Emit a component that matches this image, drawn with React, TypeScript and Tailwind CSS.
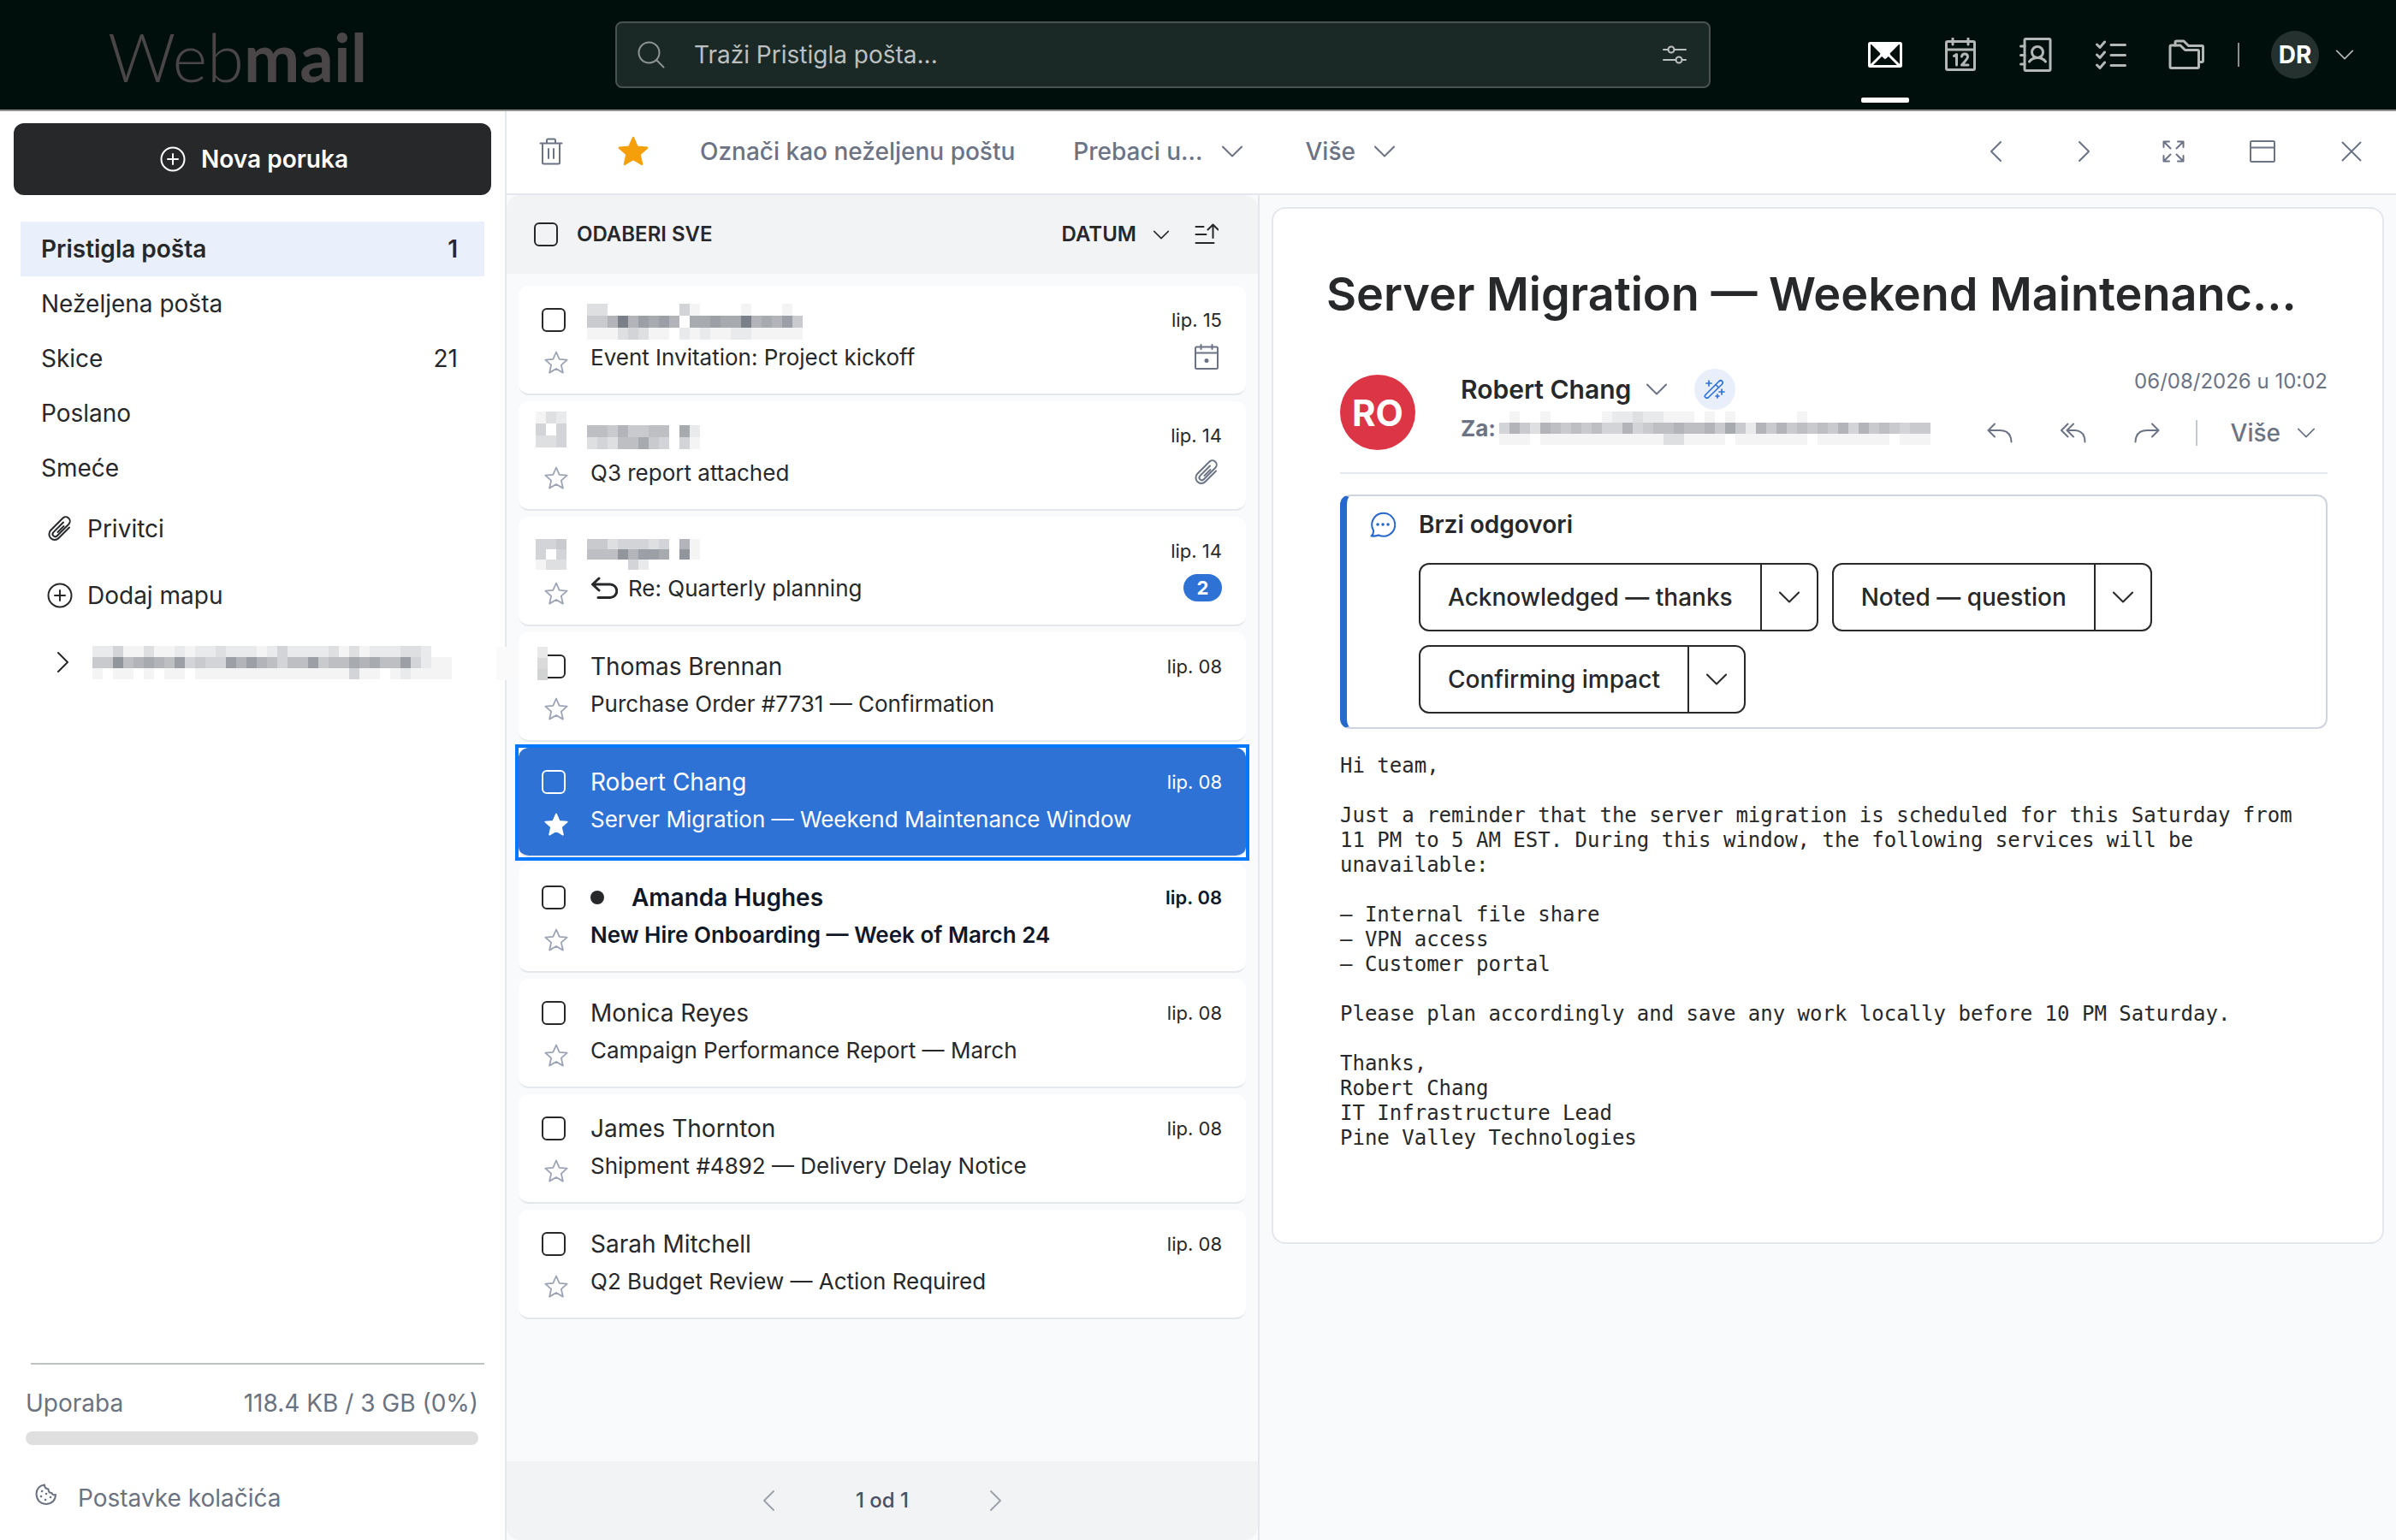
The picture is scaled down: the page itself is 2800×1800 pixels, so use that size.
import React from 'react';

interface GlyphProps {
    w: number;
    h: number;
    stroke?: number;
    className?: string;
    children: React.ReactNode;
}

// Icons are drawn on a canvas of their own pixel size
const Glyph: React.FC<GlyphProps> = ({ w, h, stroke = 2, className = '', children }) => (
    <svg
        width={w}
        height={h}
        viewBox={`0 0 ${w} ${h}`}
        fill="none"
        stroke="currentColor"
        strokeWidth={stroke}
        strokeLinecap="round"
        strokeLinejoin="round"
        className={`shrink-0 ${className}`}
        aria-hidden="true"
    >
        {children}
    </svg>
);

const ChevronDown = ({ w = 24, className = '' }: { w?: number; className?: string }) => (
    <svg width={w} height={w / 2 + 2} viewBox="0 0 26 15" fill="none" stroke="currentColor" strokeWidth="2.200" strokeLinecap="round" strokeLinejoin="round" className={`shrink-0 ${className}`} aria-hidden="true">
        <path d="M1 1.500l12 12 12-12" />
    </svg>
);

const ChevronLeft = () => <Glyph w={16} h={26}><path d="M14 2L3 13l11 11" /></Glyph>;
const ChevronRight = () => <Glyph w={16} h={26}><path d="M2 2l11 11L2 24" /></Glyph>;

const PlusCircle = () => (
    <Glyph w={30} h={30}>
        <circle cx="15" cy="15" r="13.500" />
        <path d="M15 9v12M9 15h12" />
    </Glyph>
);

const Clip = () => (
    <Glyph w={30} h={30}>
        <path d="M26 13.500L13.500 26a6.500 6.500 0 0 1-9.200-9.200L18 3a4.800 4.800 0 0 1 7.500 6.500L11.800 23.300a3 3 0 0 1-4.400-4.200L19 7.500" />
        <path d="M19.500 12l-7 7" />
    </Glyph>
);

const STAR = 'M14 1.500l3.700 8.300 9 .9-6.800 6 2 8.900-7.900-4.600-7.900 4.600 2-8.900-6.800-6 9-.9z';

const Star = ({ filled = false, size = 28 }: { filled?: boolean; size?: number }) => (
    <svg width={size} height={size} viewBox="0 0 28 28" fill={filled ? 'currentColor' : 'none'} stroke="currentColor" strokeWidth="1.800" strokeLinejoin="round" aria-hidden="true">
        <path d={STAR} />
    </svg>
);

// Redacted text: every character is the strength of one block, a dot is empty
const Mosaic = ({ rows, w = 12, h }: { rows: string[]; w?: number; h: number }) => (
    <svg width={rows[0].length * w} height={rows.length * h} shapeRendering="crispEdges" className="shrink-0" aria-hidden="true">
        {rows.map((row, y) =>
            row.split('').map((c, x) =>
                c === '.' ? null : (
                    <rect key={`${x}-${y}`} x={x * w} y={y * h} width={w} height={h} fill="#4f5560" fillOpacity={parseInt(c, 16) / 16} />
                )
            )
        )}
    </svg>
);

const CHECKBOX = 'size-7 shrink-0 appearance-none rounded-md border-2 bg-transparent';

const apps = [
    {
        label: 'E-pošta',
        active: true,
        icon: (
            <Glyph w={40} h={32} stroke={3}>
                <rect x="1.500" y="2.500" width="37" height="27" rx="1" />
                <path d="M2 2h36L22 18l-2 1-2-1z" fill="currentColor" stroke="none" />
                <path d="M3 29l12-12M37 29L25 17M15.500 15.500l4.500 4 4.500-4" />
            </Glyph>
        ),
    },
    {
        label: 'Kalendar',
        icon: (
            <Glyph w={36} h={40} stroke={3}>
                <rect x="1.500" y="4.500" width="33" height="33" rx="1.500" />
                <path d="M1.500 14h33M9 1v7M27 1v7M10.500 21.500l3-2V32M19.500 22q.5-3 3.500-3 3.500 0 3.500 3.500 0 2-7 9.500h7.500" />
            </Glyph>
        ),
    },
    {
        label: 'Kontakti',
        icon: (
            <Glyph w={38} h={40} stroke={3}>
                <rect x="6" y="1.500" width="30" height="37" rx="1.500" />
                <circle cx="21" cy="17" r="6.500" />
                <path d="M11.500 28q3.500-4.500 9.500-4.500t9.500 4.500M1.500 10H6M1.500 20.500H6M1.500 31H6" />
            </Glyph>
        ),
    },
    {
        label: 'Zadaci',
        icon: (
            <Glyph w={36} h={34} stroke={3}>
                <path d="M1.500 5l3.500 3.500 5.500-6.500M1.500 17l3.500 3.500 5.500-6.500M1.500 29l3.500 3.500 5.500-6.500M18 5.500h16.500M18 17.500h16.500M18 29.500h16.500" />
            </Glyph>
        ),
    },
    {
        label: 'Datoteke',
        icon: (
            <Glyph w={42} h={36} stroke={3}>
                <path d="M2 8.500q0-1.500 1.500-1.500H14l5.500 5.500H34q1.500 0 1.500 1.500v18q0 1.500-1.500 1.500H3.500Q2 33.500 2 32z" />
                <path d="M8 7V3.500Q8 2 9.500 2h8.500l5.500 5.500h16q1 0 1 1.500v16q0 1.500-1.500 1.500h-3" />
            </Glyph>
        ),
    },
];

const folders = [
    { name: 'Pristigla pošta', count: 1, active: true },
    { name: 'Neželjena pošta' },
    { name: 'Skice', count: 21 },
    { name: 'Poslano' },
    { name: 'Smeće' },
];

interface Message {
    id: number;
    sender?: string;
    redacted?: string[];
    redactedBox?: string[];
    block?: number;
    subject: string;
    date: string;
    mark?: 'calendar' | 'clip' | 'thread';
    selected?: boolean;
    unread?: boolean;
    replied?: boolean;
}

const messages: Message[] = [
    {
        id: 1,
        redacted: ['33.......41....1...1.', '557c79897.88988c78795', '11134311.212112211111'],
        block: 14,
        subject: 'Event Invitation: Project kickoff',
        date: 'lip. 15',
        mark: 'calendar',
    },
    {
        id: 2,
        redacted: ['66575566.82', '34366854.41'],
        redactedBox: ['132', '4.4', '334'],
        block: 14,
        subject: 'Q3 report attached',
        date: 'lip. 14',
        mark: 'clip',
    },
    {
        id: 3,
        redacted: ['55344434.71', '666a7998.a1', '....42.....'],
        redactedBox: ['445', '4.4', '133'],
        block: 12,
        subject: 'Re: Quarterly planning',
        date: 'lip. 14',
        mark: 'thread',
        replied: true,
    },
    { id: 4, sender: 'Thomas Brennan', subject: 'Purchase Order #7731 — Confirmation', date: 'lip. 08' },
    { id: 5, sender: 'Robert Chang', subject: 'Server Migration — Weekend Maintenance Window', date: 'lip. 08', selected: true },
    { id: 6, sender: 'Amanda Hughes', subject: 'New Hire Onboarding — Week of March 24', date: 'lip. 08', unread: true },
    { id: 7, sender: 'Monica Reyes', subject: 'Campaign Performance Report — March', date: 'lip. 08' },
    { id: 8, sender: 'James Thornton', subject: 'Shipment #4892 — Delivery Delay Notice', date: 'lip. 08' },
    { id: 9, sender: 'Sarah Mitchell', subject: 'Q2 Budget Review — Action Required', date: 'lip. 08' },
];

const quickReplies = ['Acknowledged — thanks', 'Noted — question', 'Confirming impact'];

const body = `Hi team,

Just a reminder that the server migration is scheduled for this Saturday from
11 PM to 5 AM EST. During this window, the following services will be
unavailable:

– Internal file share
– VPN access
– Customer portal

Please plan accordingly and save any work locally before 10 PM Saturday.

Thanks,
Robert Chang
IT Infrastructure Lead
Pine Valley Technologies`;

const Header: React.FC = () => (
    <header className="flex h-[130px] shrink-0 items-center border-b-2 border-[#8f918f] bg-[#000f0b] pr-[50px]">
        <div className="w-[719px] shrink-0 pt-1 pl-[126px] font-['Lato',sans-serif] text-[78px] leading-none text-[#4a4647]">
            <span className="font-light">Web</span>
            <span className="font-bold">mail</span>
        </div>
        <label className="flex h-[78px] flex-1 items-center rounded-lg border-2 border-[#48524f] bg-[#1b2926] pr-[26px] pl-6 text-[#bcc0bf]">
            <Glyph w={32} h={32} className="text-[#8d9492]">
                <circle cx="13.500" cy="13.500" r="12" />
                <path d="M22.500 22.500l8 8" />
            </Glyph>
            <input
                type="search"
                aria-label="Traži"
                placeholder="Traži Pristigla pošta..."
                className="ml-[34px] flex-1 bg-transparent text-[28px] outline-none placeholder:text-[#bcc0bf] placeholder:opacity-100"
            />
            <button aria-label="Filtri">
                <Glyph w={28} h={24} stroke={2}>
                    <circle cx="10" cy="6" r="3.500" />
                    <circle cx="19" cy="18" r="3.500" />
                    <path d="M1 6h5.500M13.500 6H27M1 18h14.500M22.500 18H27" />
                </Glyph>
            </button>
        </label>
        <nav className="ml-[176px] flex h-full items-center gap-8">
            {apps.map(app => (
                <a
                    key={app.label}
                    href="#"
                    aria-label={app.label}
                    className={`relative flex h-full w-14 items-center justify-center ${app.active ? 'text-white' : 'text-[#b3b7b6]'}`}
                >
                    {app.icon}
                    {app.active && <span className="absolute inset-x-0 bottom-2 h-[6px] rounded-xs bg-white" />}
                </a>
            ))}
        </nav>
        <div className="ml-8 h-7 w-[2px] bg-[#8a8f8d]" />
        <button className="ml-[37px] flex items-center gap-5 text-[#b3b7b6]">
            <span className="flex size-14 items-center justify-center rounded-full bg-[#24312f] text-[28px] font-bold text-white">DR</span>
            <ChevronDown w={20} />
        </button>
    </header>
);

const Sidebar: React.FC = () => (
    <aside className="flex w-[592px] shrink-0 flex-col border-r-2 border-[#e4e7ec] bg-white text-[28px] text-[#27282a]">
        <button className="mx-4 mt-[14px] flex h-[84px] items-center justify-center gap-[18px] rounded-xl bg-[#27282a] pl-1 font-semibold text-white">
            <PlusCircle />
            Nova poruka
        </button>
        <nav className="mt-[31px] flex flex-col px-6">
            {folders.map(folder => (
                <a
                    key={folder.name}
                    href="#"
                    className={`flex h-16 items-center justify-between pr-[31px] pl-6 ${folder.active ? 'bg-[#e9f0fb] font-semibold' : ''}`}
                >
                    <span>{folder.name}</span>
                    {folder.count && <span>{folder.count}</span>}
                </a>
            ))}
            <a href="#" className="flex h-[78px] items-center gap-[17px] pl-[31px]">
                <Clip />
                Privitci
            </a>
            <button className="flex h-[78px] items-center gap-[17px] pl-[31px]">
                <PlusCircle />
                Dodaj mapu
            </button>
        </nav>
        <button aria-label="Račun" className="relative flex h-[78px] items-center gap-[26px] pl-[66px]">
            <ChevronRight />
            <Mosaic
                h={13}
                rows={[
                    '224113112122322212422223131222332..',
                    '55a67876945449797646695668786694211',
                    '1.11.1.11.111111111111111411.121111',
                ]}
            />
            {/* stray blocks of the redaction run over the column edge */}
            <svg width="60" height="39" className="absolute top-[21px] left-[580px] z-10" shapeRendering="crispEdges" aria-hidden="true">
                <rect width="24" height="39" fill="#fafafb" />
                <rect x="48" width="12" height="13" fill="#e9e9e9" />
                <rect x="48" y="13" width="12" height="13" fill="#dadada" />
                <rect x="48" y="26" width="12" height="13" fill="#d2d3d3" />
            </svg>
        </button>
        <div className="mt-auto text-[#6b7280]">
            <hr className="mr-6 ml-9 border-t-2 border-[#bdc3c3]" />
            <div className="mr-[31px] ml-[30px]">
                <div className="mt-[25px] flex h-10 items-center justify-between">
                    <span>Uporaba</span>
                    <span>118.4 KB / 3 GB (0%)</span>
                </div>
                <div className="mt-[13px] h-4 rounded-full bg-[#dfdfdf]" />
            </div>
            <a href="#" className="mt-[42px] mb-[29px] flex h-10 items-center gap-[24px] pl-[41px]">
                <Glyph w={26} h={26} className="-mt-2">
                    <path d="M11 1.500Q2 3 1.500 12q.5 11 11 12 11-.5 11.500-11-3.500 1-4.500-2-4 0-4-4.500Q11 6 11 1.500z" />
                    <path d="M8 9h.1M7 15h.1M13 12h.1M12 19h.1M18 16h.1" stroke="currentColor" strokeWidth="2.500" />
                </Glyph>
                Postavke kolačića
            </a>
        </div>
    </aside>
);

const Toolbar: React.FC = () => (
    <div className="flex h-[98px] shrink-0 items-center border-b-2 border-[#e4e7ec] bg-white pb-[2px] text-[28px] font-medium text-[#6b7385]">
        <button aria-label="Izbriši" className="ml-[38px]">
            <Glyph w={28} h={32}>
                <path d="M1.500 6.500h25M4 6.500V29q0 1.500 1.500 1.500h17q1.500 0 1.500-1.500V6.500M9 6V3q0-1.500 1.500-1.500h7Q19 1.500 19 3v3M11 13v11M17 13v11" />
            </Glyph>
        </button>
        <button aria-label="Zvjezdica" className="ml-16 text-[#f59f0a]">
            <Star filled size={36} />
        </button>
        <button className="ml-[60px]">Označi kao neželjenu poštu</button>
        <button className="ml-[68px] flex items-center gap-[22px]">
            Prebaci u...
            <ChevronDown />
        </button>
        <button className="ml-[74px] flex items-center gap-[22px]">
            Više
            <ChevronDown />
        </button>
        <div className="mr-9 ml-auto flex items-center gap-[72px]">
            <button aria-label="Prethodna" className="flex w-8 justify-center"><ChevronLeft /></button>
            <button aria-label="Sljedeća" className="flex w-8 justify-center"><ChevronRight /></button>
            <button aria-label="Proširi" className="flex w-8 justify-center">
                <Glyph w={26} h={26} stroke={2}>
                    <path d="M1.500 8V1.500H8M1.500 1.500l8 8M18 1.500h6.500V8M24.500 1.500l-8 8M1.500 18v6.500H8M1.500 24.500l8-8M18 24.500h6.500V18M24.500 24.500l-8-8" />
                </Glyph>
            </button>
            <button aria-label="Novi prozor" className="flex w-8 justify-center">
                <Glyph w={30} h={26}>
                    <rect x="1" y="1" width="28" height="24" rx="1.500" />
                    <path d="M1 8.500h28" />
                </Glyph>
            </button>
            <button aria-label="Zatvori" className="flex w-8 justify-center">
                <Glyph w={24} h={24}><path d="M1.500 1.500l21 21M22.500 1.500l-21 21" /></Glyph>
            </button>
        </div>
    </div>
);

const Mark = ({ kind }: { kind: Message['mark'] }) => {
    if (kind === 'calendar') {
        return (
            <Glyph w={28} h={30} className="mr-1 text-[#6b7385]">
                <rect x="1" y="3.500" width="26" height="25.500" rx="1.500" />
                <path d="M1 10.500h26M7.500 1v5M20.500 1v5" />
                <circle cx="14" cy="19.500" r="1.500" fill="currentColor" />
            </Glyph>
        );
    }
    if (kind === 'clip') return <span className="mr-[3px] block text-[#6b7385]"><Clip /></span>;
    if (kind === 'thread') {
        return <span className="flex h-8 w-[45px] items-center justify-center rounded-full bg-[#2f72d6] text-[22px] font-bold text-white">2</span>;
    }
    return null;
};

const MessageRow: React.FC<{ message: Message }> = ({ message: m }) => {
    const label = `Odaberi ${m.sender ?? m.subject}`;
    return (
        <li className={m.selected ? 'bg-white outline-4 outline-[#0078ff]' : ''}>
            <div
                className={`flex h-32 gap-[25px] rounded-xl border-b-2 border-[#e4e7ec] pr-7 pl-[27px] ${
                    m.selected ? 'bg-[#2f72d6] text-white' : m.unread ? 'bg-white font-semibold text-[#101828]' : 'bg-white text-[#27282a]'
                }`}
            >
                <div className="flex w-8 shrink-0 flex-col pt-[26px]">
                    {m.redactedBox ? (
                        <span className={`-ml-[7px] flex h-7 ${m.block === 14 ? 'items-end' : 'items-start'}`}>
                            <Mosaic rows={m.redactedBox} h={m.block ?? 12} />
                        </span>
                    ) : (
                        <input type="checkbox" aria-label={label} className={`${CHECKBOX} ${m.selected ? 'border-white' : 'border-[#27282a]'}`} />
                    )}
                    <button aria-label="Zvjezdica" className={`mt-[22px] pl-[3px] ${m.selected ? 'text-white' : 'text-[#9ca3b4]'}`}>
                        <Star filled={m.selected} />
                    </button>
                </div>
                <div className="flex min-w-0 flex-1 flex-col gap-[3px] pt-5">
                    <div className="flex h-10 items-center">
                        {m.unread && <span className="mr-8 size-4 rounded-full bg-[#27282a]" />}
                        {m.redacted ? (
                            <span className={`-ml-1 ${m.block === 14 ? 'mt-1' : 'mt-2'}`}><Mosaic rows={m.redacted} h={m.block ?? 12} /></span>
                        ) : (
                            <span className="text-[28px]">{m.sender}</span>
                        )}
                        <time className="ml-auto text-[22px]">{m.date}</time>
                    </div>
                    <div className="flex h-10 items-center">
                        {m.replied && (
                            <Glyph w={32} h={26} stroke={3} className="mr-3">
                                <path d="M10 2L2.500 9l7.500 7M3 9h20a7.500 7.500 0 0 1 0 15.500H9" />
                            </Glyph>
                        )}
                        <span className="truncate text-[26px]">{m.subject}</span>
                        <span className="ml-auto"><Mark kind={m.mark} /></span>
                    </div>
                </div>
            </div>
        </li>
    );
};

const MessageList: React.FC = () => (
    <section className="flex w-[880px] shrink-0 flex-col border-r-2 border-[#e4e7ec]">
        <div className="flex h-[92px] shrink-0 items-center rounded-t-2xl bg-[#f2f3f5] pr-[46px] pl-8 text-2xl font-semibold text-[#27282a]">
            <label className="flex items-center gap-[22px]">
                <input type="checkbox" className={`${CHECKBOX} border-[#27282a]`} />
                ODABERI SVE
            </label>
            <button className="ml-auto flex items-center gap-5">
                DATUM
                <ChevronDown w={18} />
            </button>
            <button aria-label="Redoslijed" className="ml-[30px]">
                <Glyph w={28} h={26}>
                    <path d="M1.500 4h9M1.500 13h12M1.500 23h21M21.500 17V1.500M15.500 7.500l6-6 6 6" />
                </Glyph>
            </button>
        </div>
        <ul className="mt-[14px] flex flex-1 flex-col gap-[7px] px-[14px]">
            {messages.map(m => <MessageRow key={m.id} message={m} />)}
        </ul>
        <div className="flex h-[92px] shrink-0 items-center justify-center gap-[94px] rounded-b-2xl bg-[#f2f3f5] text-2xl font-medium text-[#4a5163]">
            <button aria-label="Prethodna stranica" className="text-[#9ea2ab]"><ChevronLeft /></button>
            <span>1 od 1</span>
            <button aria-label="Sljedeća stranica" className="text-[#9ea2ab]"><ChevronRight /></button>
        </div>
    </section>
);

const Reader: React.FC = () => (
    <section className="min-w-0 flex-1 px-[14px] pt-[14px]">
        <article className="rounded-2xl border-2 border-[#e4e7ec] bg-white pt-16 pr-16 pb-[107px] pl-[78px] text-[#27282a]">
            <h1 className="-ml-4 text-[54px] leading-[72px] font-semibold whitespace-nowrap">Server Migration — Weekend Maintenanc...</h1>

            <div className="mt-[51px] flex border-b-2 border-[#e4e7ec] pb-[26px]">
                <span className="mt-[7px] flex size-[88px] shrink-0 items-center justify-center rounded-full bg-[#dc3545] text-[42px] font-bold text-white">RO</span>
                <div className="ml-[53px] text-[#6b7385]">
                    <div className="flex h-12 items-center">
                        <button className="flex items-center gap-[18px]">
                            <span className="text-[30px] font-semibold text-[#27282a]">Robert Chang</span>
                            <ChevronDown />
                        </button>
                        <button aria-label="Sažetak" className="ml-8 flex size-12 items-center justify-center rounded-full bg-[#e8effb] text-[#2f72d6]">
                            <Glyph w={26} h={24}>
                                <path d="M2 18.500L18 2.500q2-1.500 3.500 0t0 3.500L5.500 21.500q-2 1.500-3.500 0t0-3zM14 6.500l3.500 3.500M6 2v6M3 5h6M21 12v6M18 15h6M16 18v4M14 20h4" strokeWidth="1.700" />
                            </Glyph>
                        </button>
                    </div>
                    <div className="mt-[1px] flex h-10 items-center gap-1 text-[26px] font-bold">
                        Za:
                        <Mosaic
                            h={13}
                            rows={[
                                '.1..1.....122322111.1.1......1............',
                                '475376565644745667667585275756565747565455',
                                '111.111111111111331111.1111111.1111111.111',
                            ]}
                        />
                    </div>
                </div>
                <div className="ml-auto flex flex-col items-end text-[#6b7385]">
                    <time className="text-2xl leading-[30px]">06/08/2026 u 10:02</time>
                    <div className="mt-[25px] flex h-10 items-center text-[28px] font-medium">
                        <button aria-label="Odgovori">
                            <Glyph w={30} h={24}><path d="M9 1.500L1.500 9 9 16.500M1.500 9H15q13 0 13.500 13.500" /></Glyph>
                        </button>
                        <button aria-label="Odgovori svima" className="ml-[56px]">
                            <Glyph w={30} h={24}><path d="M8.500 1.500L1 9l7.500 7.500M15 1.500L7.500 9l7.500 7.500M7.500 9H17q11.500 1 11.500 13.500" /></Glyph>
                        </button>
                        <button aria-label="Proslijedi" className="ml-[56px]">
                            <Glyph w={30} h={24}><path d="M21 1.500L28.500 9 21 16.500M28.500 9H15Q2 9 1.500 22.500" /></Glyph>
                        </button>
                        <span className="mr-[39px] ml-[42px] h-[30px] w-[2px] bg-[#c4c8cf]" />
                        <button className="mr-[15px] flex items-center gap-5">
                            Više
                            <ChevronDown w={20} />
                        </button>
                    </div>
                </div>
            </div>

            <div className="mt-6 rounded-xl border-2 border-l-8 border-[#d0d5dd] border-l-[#2768cc] pt-[13px] pb-4 pl-[27px]">
                <h2 className="flex h-10 items-center gap-[27px] text-[28px] font-semibold">
                    <Glyph w={30} h={30} className="text-[#2768cc]">
                        <path d="M4 22A13.500 13.500 0 1 1 10 27.500Q6 29 1.500 28.500 4.500 26 4 22z" />
                        <path d="M9 15h.1M15 15h.1M21 15h.1" strokeWidth="3.500" />
                    </Glyph>
                    Brzi odgovori
                </h2>
                <div className="mt-[25px] ml-[57px] flex flex-wrap gap-4 text-[28px] font-medium">
                    {quickReplies.map(reply => (
                        <div key={reply} className="flex h-20 rounded-xl border-2 border-[#27282a]">
                            <button className="px-8">{reply}</button>
                            <button aria-label={`Opcije: ${reply}`} className="flex w-[66px] items-center justify-center border-l-2 border-[#27282a]">
                                <ChevronDown />
                            </button>
                        </div>
                    ))}
                </div>
            </div>

            <pre className="mt-[29px] font-['DejaVu_Sans_Mono',monospace] text-2xl leading-[29px] whitespace-pre-wrap">{body}</pre>
        </article>
    </section>
);

const App: React.FC = () => (
    <div className="flex h-screen flex-col overflow-hidden bg-[#f9fafc] font-['Inter',sans-serif]">
        <Header />
        <div className="flex min-h-0 flex-1">
            <Sidebar />
            <main className="flex min-w-0 flex-1 flex-col">
                <Toolbar />
                <div className="flex min-h-0 flex-1">
                    <MessageList />
                    <Reader />
                </div>
            </main>
        </div>
    </div>
);

export default App;
